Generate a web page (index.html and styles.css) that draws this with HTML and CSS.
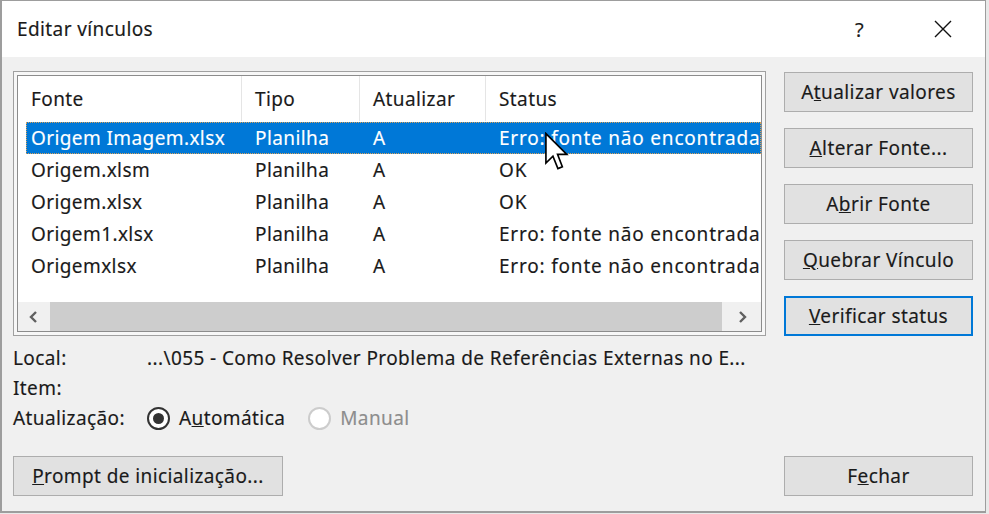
FILE: index.html
```html
<!DOCTYPE html>
<html lang="pt-BR">
<head>
    <meta charset="UTF-8">
    <title>Editar vínculos</title>
    <link rel="stylesheet" href="styles.css">
</head>
<body>
    <div class="dialog">
        <div class="titlebar">
            <span class="title">Editar vínculos</span>
            <span class="help">?</span>
            <span class="close">
                <svg width="20" height="20" viewBox="0 0 20 20"><path d="M2 2 L18 18 M18 2 L2 18" stroke="#111" stroke-width="1.4" fill="none"/></svg>
            </span>
        </div>
        <div class="content">
            <div class="main">
                <div class="left">
                    <div class="listbox">
                        <div class="list-inner">
                            <div class="list-header">
                                <div class="hcell">Fonte</div>
                                <div class="hcell">Tipo</div>
                                <div class="hcell">Atualizar</div>
                                <div class="hcell last">Status</div>
                            </div>
                            <div class="rows">
                                <div class="row selected">
                                    <span class="cell">Origem Imagem.xlsx</span>
                                    <span class="cell">Planilha</span>
                                    <span class="cell">A</span>
                                    <span class="cell status">Erro: fonte não encontrada</span>
                                </div>
                                <div class="row">
                                    <span class="cell">Origem.xlsm</span>
                                    <span class="cell">Planilha</span>
                                    <span class="cell">A</span>
                                    <span class="cell status">OK</span>
                                </div>
                                <div class="row">
                                    <span class="cell">Origem.xlsx</span>
                                    <span class="cell">Planilha</span>
                                    <span class="cell">A</span>
                                    <span class="cell status">OK</span>
                                </div>
                                <div class="row">
                                    <span class="cell">Origem1.xlsx</span>
                                    <span class="cell">Planilha</span>
                                    <span class="cell">A</span>
                                    <span class="cell status">Erro: fonte não encontrada</span>
                                </div>
                                <div class="row">
                                    <span class="cell">Origemxlsx</span>
                                    <span class="cell">Planilha</span>
                                    <span class="cell">A</span>
                                    <span class="cell status">Erro: fonte não encontrada</span>
                                </div>
                            </div>
                            <div class="hscroll">
                                <div class="arrow">
                                    <svg width="12" height="12" viewBox="0 0 12 12"><path d="M8 1 L3 6 L8 11" stroke="#606060" stroke-width="2.4" fill="none"/></svg>
                                </div>
                                <div class="thumb"></div>
                                <div class="arrow right">
                                    <svg width="12" height="12" viewBox="0 0 12 12"><path d="M4 1 L9 6 L4 11" stroke="#606060" stroke-width="2.4" fill="none"/></svg>
                                </div>
                            </div>
                        </div>
                        <!-- mouse pointer over the selected row -->
                        <svg class="cursor" width="24" height="40" viewBox="0 0 13 21">
                            <path d="M0.5 0.5 L0.5 16.5 L4.3 12.8 L7 19.5 L9.4 18.5 L6.8 11.8 L11.8 11.8 Z" fill="#fff" stroke="#000" stroke-width="0.9" stroke-linejoin="miter"/>
                        </svg>
                    </div>
                    <div class="info">
                        <div class="info-row">
                            <span class="label">Local:</span>
                            <span class="value">...\055 - Como Resolver Problema de Referências Externas no E...</span>
                        </div>
                        <div class="info-row">
                            <span class="label">Item:</span>
                        </div>
                        <div class="info-row">
                            <span class="label">Atualização:</span>
                            <span class="radio checked"></span>
                            <span class="radio-text">A<u>u</u>tomática</span>
                            <span class="radio disabled"></span>
                            <span class="radio-text disabled">Manual</span>
                        </div>
                    </div>
                </div>
                <div class="buttons">
                    <button class="btn">A<u>t</u>ualizar valores</button>
                    <button class="btn"><u>A</u>lterar Fonte...</button>
                    <button class="btn">A<u>b</u>rir Fonte</button>
                    <button class="btn"><u>Q</u>uebrar Vínculo</button>
                    <button class="btn focused"><u>V</u>erificar status</button>
                </div>
            </div>
            <div class="footer">
                <button class="btn prompt"><u>P</u>rompt de inicialização...</button>
                <button class="btn close-btn">F<u>e</u>char</button>
            </div>
        </div>
    </div>
</body>
</html>
```

FILE: styles.css
```css
html {
    background: #e9e9e9;
}
body {
    margin: 0;
    padding: 0;
    font-family: "Noto Sans", "Open Sans", sans-serif;
    font-size: 19px;
    letter-spacing: 0.4px;
    color: #1a1a1a;
    -webkit-text-stroke: 0.15px;
}
.dialog {
    width: 986px;
    height: 513px;
    box-sizing: border-box;
    border: 2px solid #9d9d9d;
    border-top-width: 1px;
    border-right-width: 1px;
    background: #f0f0f0;
    display: flex;
    flex-direction: column;
}

/* Title bar */
.titlebar {
    height: 56px;
    background: #fff;
    display: flex;
    align-items: center;
    padding-left: 15px;
}
.title {
    flex-grow: 1;
    font-size: 19px;
    color: #1a1a1a;
}
.help {
    font-size: 20px;
    width: 30px;
    margin-right: 48px;
}
.close {
    display: flex;
    width: 52px;
}

/* Body */
.content {
    flex-grow: 1;
    padding: 14px 12px 15px 11px;
    display: flex;
    flex-direction: column;
    justify-content: space-between;
}
.main {
    display: flex;
    gap: 18px;
}
.left {
    width: 753px;
}

/* List view */
.listbox {
    position: relative;
    border: 1px solid #a0a0a0;
    padding: 3px;
    background: #f7f7f7;
    height: 265px;
    box-sizing: border-box;
}
.list-inner {
    border: 1px solid #8c8c8c;
    background: #fff;
    height: 100%;
    box-sizing: border-box;
    display: flex;
    flex-direction: column;
    overflow: hidden;
}
.list-header {
    display: grid;
    grid-template-columns: 224px 118px 126px 1fr;
    height: 45px;
    margin-bottom: 1px;
}
.hcell {
    padding-left: 13px;
    display: flex;
    align-items: center;
    border-right: 1px solid #e5e5e5;
    white-space: nowrap;
}
.hcell.last {
    border-right: none;
}
.rows {
    flex-grow: 1;
    padding-left: 8px;
}
.row {
    display: grid;
    grid-template-columns: 216px 118px 126px 1fr;
    height: 32px;
    align-items: center;
    white-space: nowrap;
    box-sizing: border-box;
}
.row .cell {
    padding-left: 13px;
    overflow: hidden;
}
.row .cell:first-child {
    padding-left: 5px;
}
.row .cell.status {
    letter-spacing: 0.8px;
}
.row.selected {
    background: #0078d7;
    color: #fff;
    outline: 1px dotted #d9a25a;
    outline-offset: -1px;
}

/* Horizontal scroll bar */
.hscroll {
    height: 29px;
    background: #f0f0f0;
    display: flex;
    align-items: stretch;
}
.hscroll .arrow {
    width: 32px;
    display: flex;
    align-items: center;
    justify-content: center;
}
.hscroll .arrow.right {
    width: 39px;
}
.thumb {
    flex-grow: 1;
    background: #cdcdcd;
}
.cursor {
    position: absolute;
    left: 531px;
    top: 60px;
}

/* Info below the list */
.info {
    margin-top: 7px;
}
.info-row {
    display: flex;
    align-items: center;
    height: 30px;
    white-space: nowrap;
}
.label {
    width: 134px;
    flex-shrink: 0;
}
.radio {
    width: 19px;
    height: 19px;
    border: 2px solid #333;
    border-radius: 50%;
    background: #fff;
    position: relative;
    flex-shrink: 0;
}
.radio.checked::after {
    content: "";
    position: absolute;
    left: 4px;
    top: 4px;
    width: 11px;
    height: 11px;
    border-radius: 50%;
    background: #333;
}
.radio.disabled {
    border-color: #cccccc;
    margin-left: 23px;
}
.radio-text {
    margin-left: 9px;
}
.radio-text.disabled {
    color: #8d8d8d;
}

/* Buttons */
.buttons {
    display: flex;
    flex-direction: column;
    gap: 16px;
    padding-top: 1px;
}
.btn {
    font-family: "Noto Sans", "Open Sans", sans-serif;
    font-size: 19px;
    letter-spacing: 0.4px;
    -webkit-text-stroke: 0.15px;
    color: #1a1a1a;
    background: #e1e1e1;
    border: 1px solid #adadad;
    height: 40px;
    width: 189px;
    padding: 0;
    margin: 0;
}
.btn.focused {
    border: 2px solid #0078d7;
}
.footer {
    display: flex;
    justify-content: space-between;
    align-items: flex-end;
}
.btn.prompt {
    width: 270px;
}
```
